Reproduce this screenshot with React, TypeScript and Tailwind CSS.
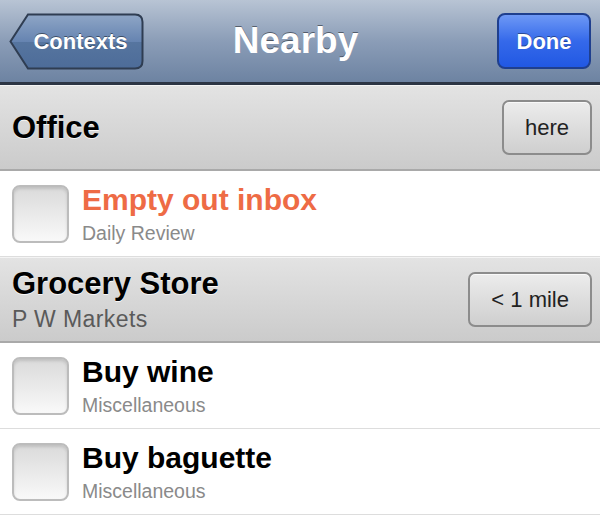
import React from "react";

type Task = { title: string; subtitle: string; urgent?: boolean };

const font = { fontFamily: '"Liberation Sans", Arial, sans-serif' };

const BackButton = ({ label }: { label: string }) => (
  <button className="relative h-[57px] w-[135px] ml-[9px]">
    <svg className="absolute inset-0" width="135" height="57" viewBox="0 0 135 57">
      <defs>
        <linearGradient id="backg" x1="0" y1="0" x2="0" y2="1">
          <stop offset="0" stopColor="#8fa6c6" />
          <stop offset="0.5" stopColor="#6684b1" />
          <stop offset="0.51" stopColor="#56759f" />
          <stop offset="1" stopColor="#4d6c99" />
        </linearGradient>
      </defs>
      <path
        d="M19 1.5 H126 Q133.5 1.5 133.5 9 V48 Q133.5 55.5 126 55.5 H19 L1.5 28.5 Z"
        fill="url(#backg)"
        stroke="#2f3d52"
        strokeWidth="2"
      />
    </svg>
    <span className="relative pl-[8px] text-[22px] font-bold text-white [text-shadow:0_-1px_0_rgba(0,0,0,0.45)]">
      {label}
    </span>
  </button>
);

const Checkbox = () => (
  <div className="h-[58px] w-[57px] shrink-0 rounded-[8px] border-2 border-[#bcbcbc] bg-gradient-to-b from-[#dadada] to-[#f9f9f9] shadow-[inset_0_2px_3px_rgba(0,0,0,0.12)]" />
);

const PlaceHeader = ({ name, address, distance }: { name: string; address?: string; distance: string }) => (
  <div className="flex h-[86px] items-center justify-between border-b-2 border-[#a9a9a9] border-t border-t-[#f4f4f4] bg-gradient-to-b from-[#e3e3e3] to-[#cbcbcb] pl-3 pr-[8px]">
    <div className="flex flex-col">
      <div className="text-[31px] font-bold leading-[38px] text-black [text-shadow:0_1px_0_rgba(255,255,255,0.8)]">{name}</div>
      {address && <div className="text-[23px] leading-[32px] tracking-[0.4px] text-[#5a5a5a]">{address}</div>}
    </div>
    <button className="h-[55px] rounded-[7px] border-2 border-[#8c8c8c] bg-gradient-to-b from-[#ececec] to-[#cfcfcf] px-[21px] text-[22px] text-[#222] shadow-[inset_0_1px_0_rgba(255,255,255,0.7)]">
      {distance}
    </button>
  </div>
);

const TaskRow = ({ task }: { task: Task }) => (
  <div className="flex h-[86px] items-center gap-[13px] border-b border-[#dddddd] bg-white pl-3">
    <Checkbox />
    <div className="flex flex-col">
      <div className={"text-[30px] font-bold leading-[38px] " + (task.urgent ? "text-[#ee6b45]" : "text-black")}>
        {task.title}
      </div>
      <div className="text-[19.5px] leading-[28px] text-[#8a8a8a]">{task.subtitle}</div>
    </div>
  </div>
);

export default function App() {
  return (
    <div className="h-[515px] w-[600px] overflow-hidden bg-white" style={font}>
      <div className="grid h-[85px] grid-cols-[1fr_auto_1fr] items-center border-b-[3px] border-[#2c3544] bg-gradient-to-b from-[#b8c4d4] via-[#8b9db7] to-[#6d83a2] pr-[9px]">
        <div className="flex">
          <BackButton label="Contexts" />
        </div>
        <div className="text-[37px] font-bold text-white [text-shadow:0_-1px_0_rgba(0,0,0,0.45)]">Nearby</div>
        <div className="flex justify-end">
          <button className="h-[56px] w-[94px] rounded-[8px] border-2 border-[#1f3f8e] bg-gradient-to-b from-[#6e98f5] via-[#3569ea] to-[#2158e3] text-[22px] font-bold text-white [text-shadow:0_-1px_0_rgba(0,0,0,0.4)]">
            Done
          </button>
        </div>
      </div>
      <PlaceHeader name="Office" distance="here" />
      <TaskRow task={{ title: "Empty out inbox", subtitle: "Daily Review", urgent: true }} />
      <PlaceHeader name="Grocery Store" address="P W Markets" distance="< 1 mile" />
      <TaskRow task={{ title: "Buy wine", subtitle: "Miscellaneous" }} />
      <TaskRow task={{ title: "Buy baguette", subtitle: "Miscellaneous" }} />
    </div>
  );
}
